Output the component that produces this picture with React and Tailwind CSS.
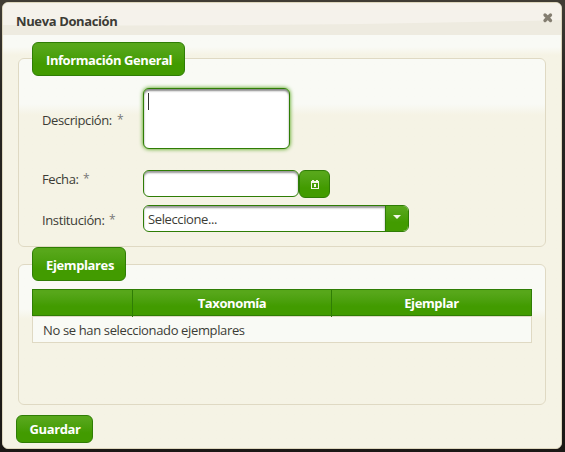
import React from 'react';

const green = 'border border-[#2f7d05] bg-linear-to-b from-[#57a71a] from-10% to-[#429b00] to-65% text-white font-bold';

function Legend({ children, className }) {
  return (
    <div className={`${green} ${className} relative ml-[13px] flex h-[34px] items-center rounded-[6px] pl-[13px] pt-px`}>
      {children}
    </div>
  );
}

function Label({ children, className, width }) {
  return (
    <div className={`flex w-[101px] shrink-0 ${className}`}>
      <span className={width}>{children}</span>
      <span className="text-[12px] text-[#777]">*</span>
    </div>
  );
}

export default function App() {
  return (
    <div className="h-[452px] w-[565px] overflow-hidden bg-linear-to-b from-[#403c34] from-1% via-[#282622] via-20% to-[#1b1815] pl-[2px] pt-[2px] font-['Open_Sans','Noto_Sans',sans-serif] text-[13px] leading-[18px] tracking-[-0.38px] text-[#3c3c35]">
      <div className="h-[447px] w-[560px] overflow-hidden rounded-[6px] border border-[#ddd6bd] bg-[#f5f3e5]">
        <header className="relative flex h-8 justify-between bg-[#eeebe0] pl-[13px] pr-[8px]">
          <svg className="absolute left-0 top-0" width="558" height="32">
            <path d="M0 0H558V17Q280 24 0 22Z" fill="#f5f2eb" />
          </svg>
          <h1 className="relative mt-[9px] whitespace-nowrap text-[13px] font-bold">Nueva Donación</h1>
          <svg className="relative mt-[9px]" width="11" height="11" viewBox="0 0 11 11">
            <path d="M3 3L8.5 8.5M8.5 3L3 8.5" stroke="#847e71" strokeWidth="3.3" strokeLinecap="round" />
          </svg>
        </header>
        <main className="h-[413px] bg-linear-to-b from-[#f9faf5] from-[12px] to-[#f5f3e5] to-[20px] pl-[15px] pt-[23px]">
          <section className="h-[189px] w-[528px] rounded-[6px] border border-[#dfd9c3] bg-linear-to-b from-[#f9faf5] from-[45px] to-[#f5f3e5] to-[56px]">
            <Legend className="-mt-[17px] w-[153px]"><span className="whitespace-nowrap tracking-[-0.42px]">Información General</span></Legend>
            <div className="ml-[23px] mt-[12px] flex h-[61px]">
              <Label className="pt-[23px]" width="w-[75px]">Descripción:</Label>
              <div className="h-[61px] w-[147px] rounded-[6px] border border-[#2f7d05] bg-white pl-[4px] pt-[4px] shadow-[0_0_4px_#429b00,inset_0_2px_2px_#888]">
                <div className="h-[17px] w-px bg-[#333]" />
              </div>
            </div>
            <div className="ml-[23px] mt-[21px] flex h-7">
              <Label width="w-[41px]">Fecha:</Label>
              <div className="h-[27px] w-[156px] rounded-[6px] border border-[#2f7d05] bg-white shadow-[inset_0_2px_2px_#999]" />
              <div className={`${green} flex h-7 w-[31px] items-center justify-center rounded-[6px] pl-px pt-px`}>
                <svg width="8" height="9" viewBox="0 0 8 9" fill="#f4f6e9" shapeRendering="crispEdges">
                  <path d="M1 0H3V1H5V0H7V1H8V3H0V1H1ZM0 3H1V9H0ZM7 3H8V9H7ZM1 8H7V9H1ZM3 4H5V7H3Z" />
                </svg>
              </div>
            </div>
            <div className="ml-[23px] mt-[7px] flex h-[27px]">
              <Label className="pt-[6px]" width="w-[67px]">Institución:</Label>
              <div className="flex h-[27px] w-[266px] overflow-hidden rounded-[6px] border border-[#2f7d05] bg-white">
                <div className="flex w-[241px] shrink-0 items-center pl-[4px] shadow-[inset_0_2px_2px_#999]"><span>Seleccione...</span></div>
                <div className="flex w-[23px] justify-center border-l border-[#2f7d05] bg-linear-to-b from-[#57a71a] from-10% to-[#429b00] to-65% pt-[9px]">
                  <svg width="8" height="4" viewBox="0 0 8 4"><path d="M0 0H8L4 4Z" fill="#f4f6e9" /></svg>
                </div>
              </div>
            </div>
          </section>
          <section className="mt-[17px] h-[141px] w-[528px] rounded-[6px] border border-[#dfd9c3] bg-linear-to-b from-[#f9faf5] from-[44px] to-[#f5f3e5] to-[54px]">
            <Legend className="-mt-[18px] w-[94px]"><span>Ejemplares</span></Legend>
            <div className="ml-[13px] mt-[8px] w-[500px]">
              <div className={`${green} grid h-[27px] grid-cols-[99px_199px_1fr] text-center leading-[27px]`}>
                <div />
                <div className="border-l border-[#2f7d05]"><span>Taxonomía</span></div>
                <div className="border-l border-[#2f7d05]"><span>Ejemplar</span></div>
              </div>
              <div className="h-[27px] border border-[#dfd9c3] bg-[#f9faf5] pl-[10px] leading-[26px]"><span className="tracking-[-0.36px]">No se han seleccionado ejemplares</span></div>
            </div>
          </section>
          <button className={`${green} -ml-[2px] mt-[10px] block h-7 w-[77px] rounded-[6px] pl-px text-center leading-[26px]`}><span>Guardar</span></button>
        </main>
      </div>
    </div>
  );
}
